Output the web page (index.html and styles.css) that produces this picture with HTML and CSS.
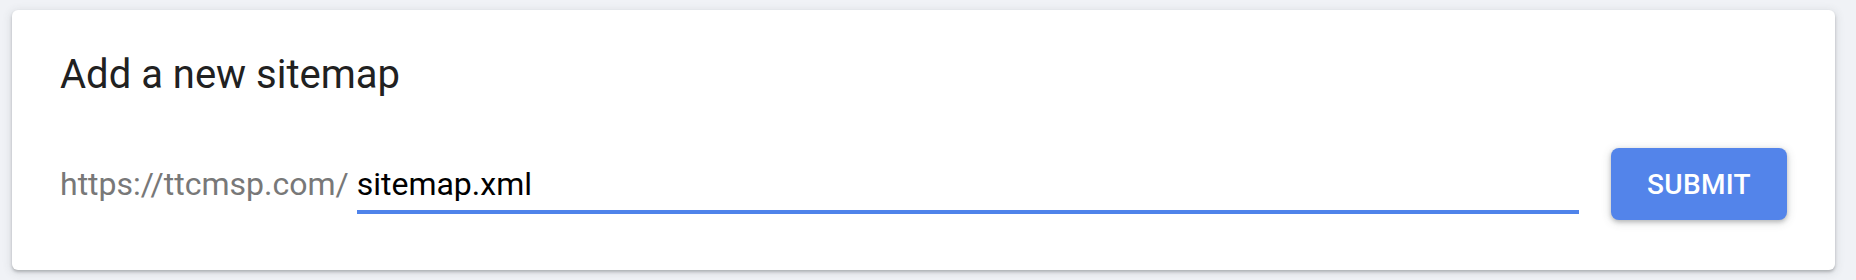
FILE: index.html
```html
<!DOCTYPE html>
<html lang="en">
<head>
<meta charset="utf-8">
<title>Add a new sitemap</title>
<link rel="stylesheet" href="styles.css">
</head>
<body>
<main class="page">
  <section class="card">
    <h2 class="card-title">Add a new sitemap</h2>
    <form class="sitemap-form" onsubmit="return false">
      <div class="field">
        <span class="prefix">https://ttcmsp.com/</span>
        <input class="field-input" type="text" value="sitemap.xml" aria-label="Sitemap URL">
      </div>
      <button class="submit-btn" type="submit">Submit</button>
    </form>
  </section>
</main>
</body>
</html>
```

FILE: styles.css
```css
html, body {
  margin: 0;
  padding: 0;
  background: #f0f2f6;
}

body {
  font-family: Roboto, "Noto Sans", "Liberation Sans", Arial, sans-serif;
  color: #202124;
}

.page {
  padding: 10px 21px 10px 12px;
}

.card {
  background: #ffffff;
  border-radius: 6px;
  box-shadow: 0 2px 3px rgba(60, 64, 67, 0.30), 0 2px 8px 2px rgba(60, 64, 67, 0.10);
  padding: 40px 48px 50px 48px;
  box-sizing: border-box;
  height: 260px;
}

.card-title {
  margin: 0;
  font-size: 40px;
  line-height: 50px;
  font-weight: 400;
  color: #212121;
}

.sitemap-form {
  margin: 48px 0 0 0;
  display: flex;
  align-items: flex-start;
  gap: 32px;
}

.field {
  flex: 1;
  display: flex;
  align-items: flex-end;
  margin-top: 16px;
  gap: 8px;
}

.prefix {
  font-size: 32px;
  line-height: 40px;
  color: #787878;
  padding-bottom: 10px;
  white-space: nowrap;
}

.field-input {
  flex: 1;
  min-width: 0;
  font-family: inherit;
  font-size: 32px;
  line-height: 40px;
  height: 40px;
  color: #000000;
  border: none;
  border-bottom: 4px solid #4f83ea;
  padding: 0 0 6px 0;
  margin: 0;
  outline: none;
  background: transparent;
  box-sizing: content-box;
}

.submit-btn {
  flex: none;
  width: 176px;
  height: 72px;
  border: none;
  border-radius: 8px;
  background: #5384ea;
  color: #ffffff;
  font-family: inherit;
  font-size: 28px;
  font-weight: 500;
  letter-spacing: 0.3px;
  text-transform: uppercase;
  box-shadow: 0 2px 4px rgba(60, 64, 67, 0.30), 0 2px 8px 2px rgba(60, 64, 67, 0.12);
  cursor: pointer;
  padding: 0;
}
```
